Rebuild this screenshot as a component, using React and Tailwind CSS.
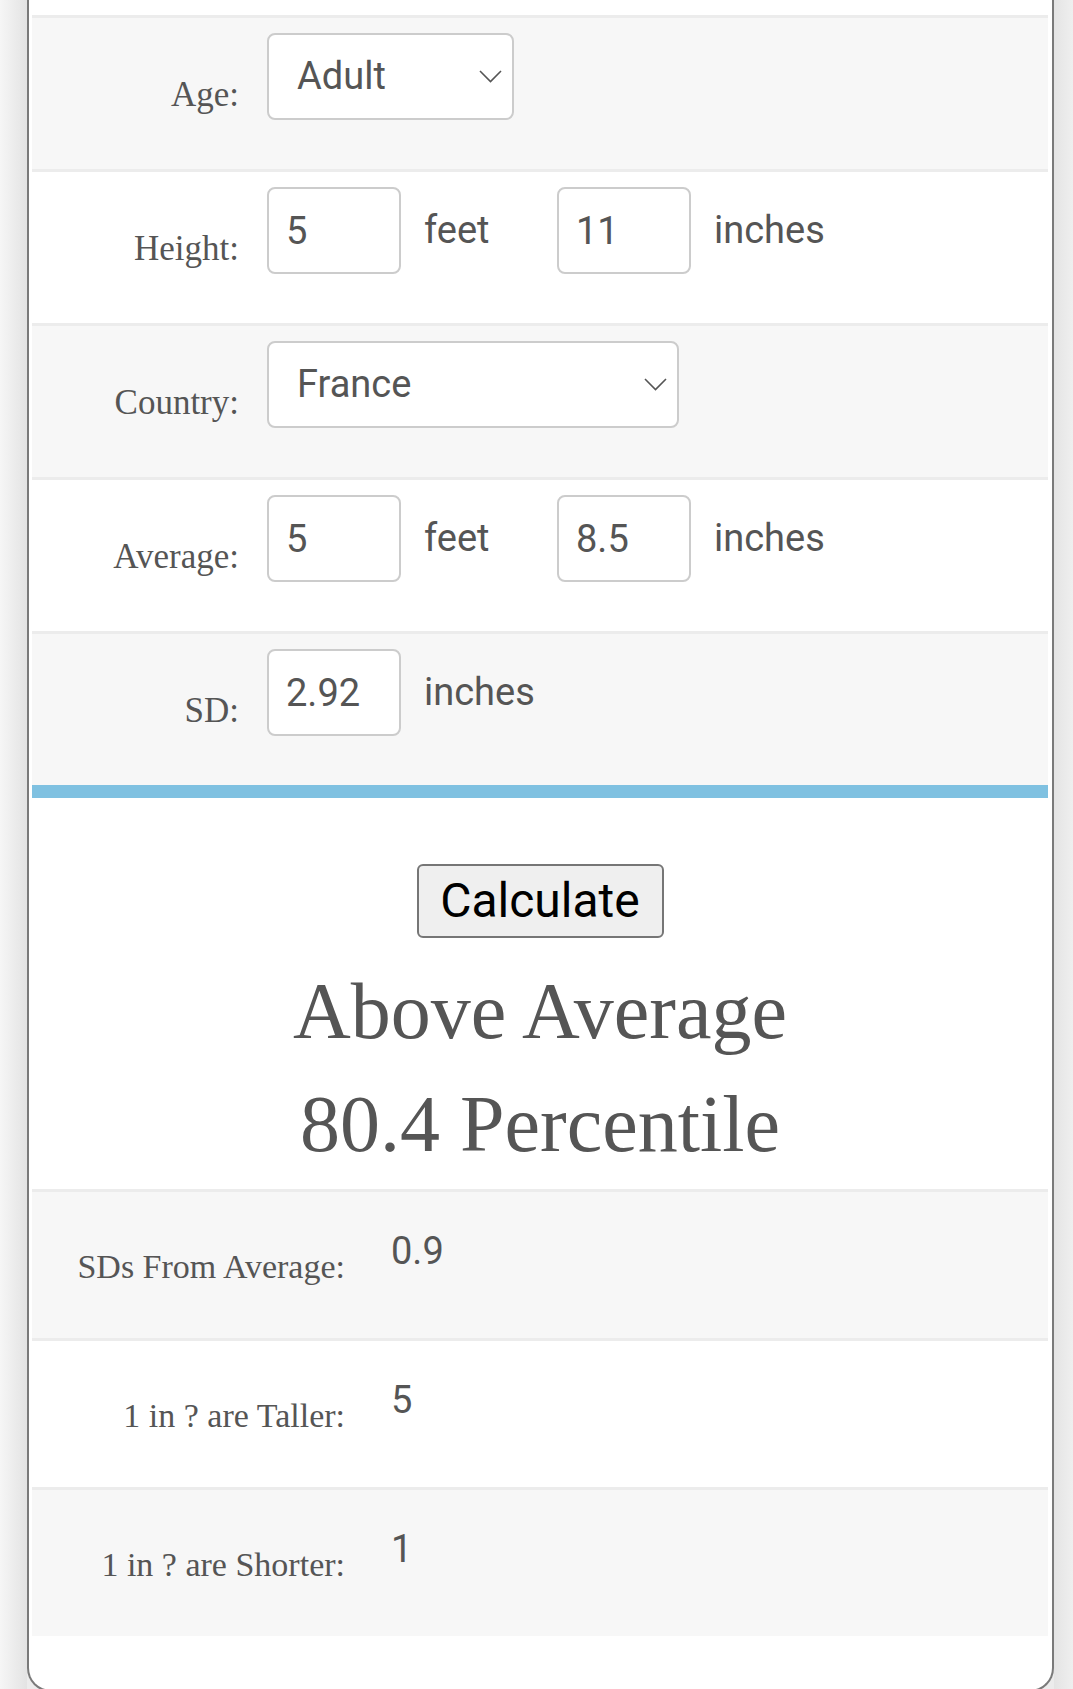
import React from "react";

const serif = "font-['Liberation_Serif',serif]";
const sans = "font-['Roboto',sans-serif]";

function Chevron() {
  return (
    <svg width="23" height="13" viewBox="0 0 23 13" fill="none">
      <polyline points="1,1 11.5,11.5 22,1" stroke="#555" strokeWidth="1.6" />
    </svg>
  );
}

function FormRow({ label, shade, children }) {
  return (
    <div className={`flex items-center border-t-[3px] border-[#ececec] ${shade ? "bg-[#f7f7f7]" : "bg-white"}`}>
      <div className={`w-[207px] pt-[4px] text-right text-[35px] text-[#555] ${serif}`}>{label}</div>
      <div className="flex items-center pl-[28px] pt-[15px] pb-[49px]">{children}</div>
    </div>
  );
}

function Box({ value }) {
  return (
    <input
      type="text"
      readOnly
      value={value}
      className={`w-[134px] h-[87px] rounded-[8px] border-2 border-[#cccccc] bg-white pl-[17px] text-[38px] text-[#555] outline-none ${sans}`}
    />
  );
}

function Select({ value, width }) {
  return (
    <div className={`flex h-[87px] items-center justify-between rounded-[8px] border-2 border-[#cccccc] bg-white pl-[28px] pr-[10px] text-[38px] text-[#555] ${sans} ${width}`}>
      <span>{value}</span>
      <Chevron />
    </div>
  );
}

function Unit({ children, wide }) {
  return (
    <span className={`ml-[23px] text-[38px] text-[#555] ${sans} ${wide ? "w-[133px]" : ""}`}>{children}</span>
  );
}

function ResultRow({ label, value, shade }) {
  return (
    <div className={`flex h-[149px] items-center border-t-[3px] border-[#ececec] ${shade ? "bg-[#f7f7f7]" : "bg-white"}`}>
      <div className={`w-[313px] pt-[3px] text-right text-[34px] text-[#555] ${serif}`}>{label}</div>
      <div className={`self-start pl-[46px] pt-[31px] text-[38px] text-[#555] ${sans}`}>{value}</div>
    </div>
  );
}

export default function App() {
  return (
    <div className="flex min-h-[1689px] bg-[#ececec]">
      <div className="w-[27px] bg-linear-to-r from-[#f6f6f6] to-[#e3e3e3]" />
      <div className="flex-1 rounded-b-[24px] border-2 border-t-0 border-[#7a7a7a] bg-white pl-[3px] pr-[4px] pt-[15px] pb-[54px]">
        <FormRow label="Age:" shade>
          <Select value="Adult" width="w-[247px]" />
        </FormRow>
        <FormRow label="Height:">
          <Box value="5" />
          <Unit wide>feet</Unit>
          <Box value="11" />
          <Unit>inches</Unit>
        </FormRow>
        <FormRow label="Country:" shade>
          <Select value="France" width="w-[412px]" />
        </FormRow>
        <FormRow label="Average:">
          <Box value="5" />
          <Unit wide>feet</Unit>
          <Box value="8.5" />
          <Unit>inches</Unit>
        </FormRow>
        <FormRow label="SD:" shade>
          <Box value="2.92" />
          <Unit>inches</Unit>
        </FormRow>
        <div className="h-[13px] bg-[#7fc1e1]" />

        <div className="flex flex-col items-center pt-[66px]">
          <button className={`h-[74px] w-[247px] rounded-[6px] border-2 border-[#767676] bg-[#efefef] text-[48px] leading-none text-black ${sans}`}>
            Calculate
          </button>
          <div className={`mt-[17px] mb-[8px] text-center text-[80px] leading-[113px] text-[#555] ${serif}`}>
            <div>Above Average</div>
            <div>80.4 Percentile</div>
          </div>
        </div>

        <ResultRow label="SDs From Average:" value="0.9" shade />
        <ResultRow label="1 in ? are Taller:" value="5" />
        <ResultRow label="1 in ? are Shorter:" value="1" shade />
      </div>
      <div className="w-[19px] bg-linear-to-r from-[#e4e4e4] to-[#efefef]" />
    </div>
  );
}
